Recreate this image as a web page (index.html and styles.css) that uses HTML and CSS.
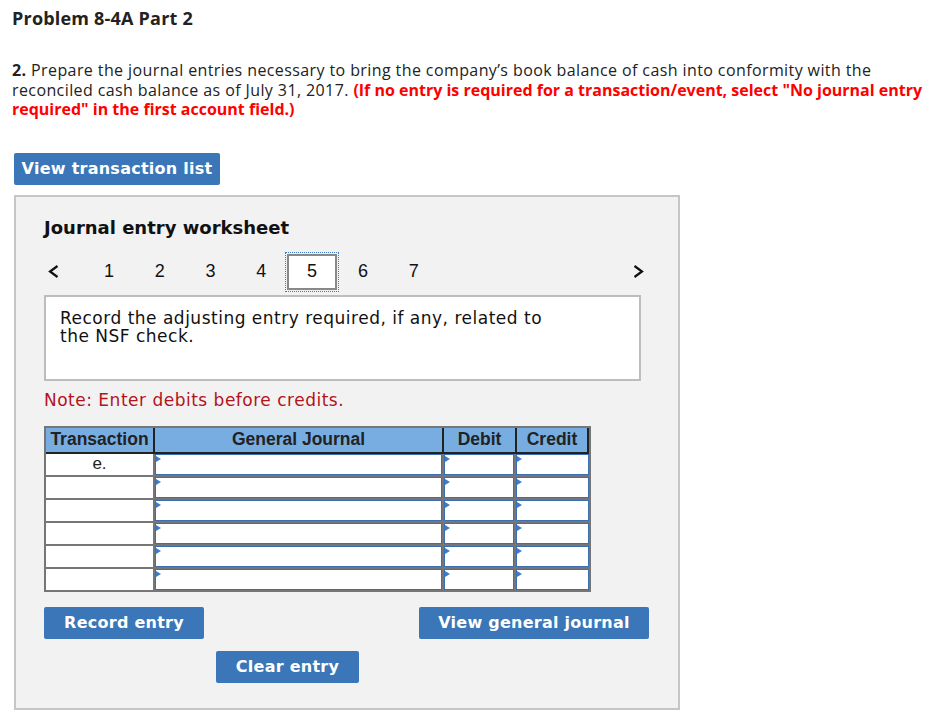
FILE: index.html
```html
<!DOCTYPE html>
<html lang="en">
<head>
<meta charset="utf-8">
<title>Problem 8-4A Part 2</title>
<link rel="stylesheet" href="styles.css">
</head>
<body>
<h1 class="title">Problem 8-4A Part 2</h1>
<p class="instructions"><b>2.</b> Prepare the journal entries necessary to bring the company’s book balance of cash into conformity with the<br>reconciled cash balance as of July 31, 2017. <b class="warn">(If no entry is required for a transaction/event, select "No journal entry<br>required" in the first account field.)</b></p>
<button class="btn btn-list">View transaction list</button>
<section class="panel">
  <h2 class="ws-title">Journal entry worksheet</h2>
  <nav class="pager">
    <span class="arrow prev"><svg width="11" height="13" viewBox="0 0 11 13"><path d="M9.5 1 L2 6.5 L9.5 12" fill="none" stroke="#111" stroke-width="2.2"/></svg></span>
    <div class="pages">
      <span class="pg">1</span><span class="pg">2</span><span class="pg">3</span><span class="pg">4</span><span class="pg active">5</span><span class="pg">6</span><span class="pg">7</span>
    </div>
    <span class="arrow next"><svg width="11" height="13" viewBox="0 0 11 13"><path d="M1.5 1 L9 6.5 L1.5 12" fill="none" stroke="#111" stroke-width="2.2"/></svg></span>
  </nav>
  <div class="prompt">Record the adjusting entry required, if any, related to<br>the NSF check.</div>
  <p class="note">Note: Enter debits before credits.</p>
  <div class="jtable">
    <div class="jhead">
      <div class="hc">Transaction</div>
      <div class="hc">General Journal</div>
      <div class="hc">Debit</div>
      <div class="hc">Credit</div>
    </div>
    <div class="jbody">
      <div class="tc">e.</div><div class="ic"></div><div class="ic"></div><div class="ic"></div>
      <div class="tc"></div><div class="ic"></div><div class="ic"></div><div class="ic"></div>
      <div class="tc"></div><div class="ic"></div><div class="ic"></div><div class="ic"></div>
      <div class="tc"></div><div class="ic"></div><div class="ic"></div><div class="ic"></div>
      <div class="tc"></div><div class="ic"></div><div class="ic"></div><div class="ic"></div>
      <div class="tc"></div><div class="ic"></div><div class="ic"></div><div class="ic"></div>
    </div>
  </div>
  <div class="actions">
    <button class="btn btn-record">Record entry</button>
    <button class="btn btn-view">View general journal</button>
  </div>
  <div class="actions2">
    <button class="btn btn-clear">Clear entry</button>
  </div>
</section>
</body>
</html>
```

FILE: styles.css
```css
* { box-sizing: border-box; }
body {
  margin: 0;
  padding: 8px 0 0 12px;
  background: #fff;
  color: #222;
  font-family: "Open Sans", "Liberation Sans", sans-serif;
}
.title {
  margin: 0;
  font-size: 18px;
  line-height: 20px;
  font-weight: 700;
  letter-spacing: 0.2px;
  color: #222;
}
.instructions {
  margin: 33px 0 0 0;
  width: 935px;
  font-size: 16px;
  line-height: 19.5px;
  letter-spacing: 0.4px;
  color: #222;
  white-space: nowrap;
}
.instructions b { font-weight: 700; }
.instructions .warn { color: #f00; letter-spacing: 0; }
.btn {
  display: inline-flex;
  align-items: center;
  justify-content: center;
  height: 32px;
  border: none;
  border-radius: 2px;
  background: #3a76b8;
  color: #fff;
  font-family: "DejaVu Sans", Verdana, sans-serif;
  font-weight: 700;
  font-size: 16px;
  letter-spacing: 0.25px;
  padding: 0;
}
.btn-list {
  margin: 33px 0 0 2px;
  width: 206px;
}
.panel {
  margin: 10px 0 0 2px;
  width: 666px;
  height: 515px;
  border: 2px solid #c6c6c6;
  background: #f2f2f2;
  padding: 20px 28px 0 28px;
  font-family: "DejaVu Sans", Verdana, sans-serif;
}
.ws-title {
  margin: 0;
  font-size: 18px;
  line-height: 22px;
  font-weight: 700;
  color: #111;
}
.pager {
  margin-top: 15px;
  display: flex;
  align-items: center;
  height: 36px;
}
.arrow { display: flex; align-items: center; }
.arrow.prev { margin-left: 4px; }
.arrow.next { margin-left: auto; margin-right: 6px; }
.pages {
  display: flex;
  margin-left: 24.5px;
}
.pg {
  width: 50.8px;
  height: 36px;
  display: flex;
  align-items: center;
  justify-content: center;
  font-family: "Liberation Sans", Arial, sans-serif;
  font-size: 18px;
  color: #111;
}
.pg.active {
  background: #fff;
  border: 2px solid #888;
  outline: 1px dotted #3a7ac8;
  outline-offset: 1px;
}
.prompt {
  margin-top: 5px;
  width: 597px;
  height: 86px;
  border: 2px solid #bdbdbd;
  background: #fff;
  padding: 12px 14px;
  font-size: 17px;
  letter-spacing: 0.5px;
  line-height: 18px;
  color: #111;
}
.note {
  margin: 9px 0 0 0;
  font-size: 17px;
  letter-spacing: 0.5px;
  line-height: 20px;
  color: #b3131b;
}
.jtable {
  margin-top: 16px;
  width: 547px;
  border: 2px solid #767676;
  background: #767676;
  font-family: "Liberation Sans", Arial, sans-serif;
}
.jhead {
  display: grid;
  grid-template-columns: 109px 289px 73px 72px;
  border-bottom: 2px solid #222;
}
.hc {
  height: 24px;
  background: #78ade2;
  border-right: 2px solid #222;
  display: flex;
  align-items: center;
  justify-content: center;
  font-weight: 700;
  font-size: 17.5px;
  color: #222;
}
.jbody {
  display: grid;
  grid-template-columns: 107px 287px 70px 73px;
  column-gap: 2px;
  row-gap: 2px;
}
.tc {
  height: 21px;
  background: #fff;
  display: flex;
  align-items: center;
  justify-content: center;
  font-size: 17px;
  color: #222;
}
.ic {
  position: relative;
  height: 21px;
  background: #fff;
  border: 1px solid #3a6fb3;
}
.ic::before {
  content: "";
  position: absolute;
  left: 0;
  top: 1px;
  border-left: 5px solid #3b7cd0;
  border-top: 3px solid transparent;
  border-bottom: 3px solid transparent;
}
.actions {
  margin-top: 15px;
  display: flex;
  justify-content: space-between;
  width: 605px;
}
.btn-record { width: 160px; }
.btn-view { width: 230px; }
.actions2 {
  margin-top: 12px;
  padding-left: 172px;
}
.btn-clear { width: 143px; }
```
